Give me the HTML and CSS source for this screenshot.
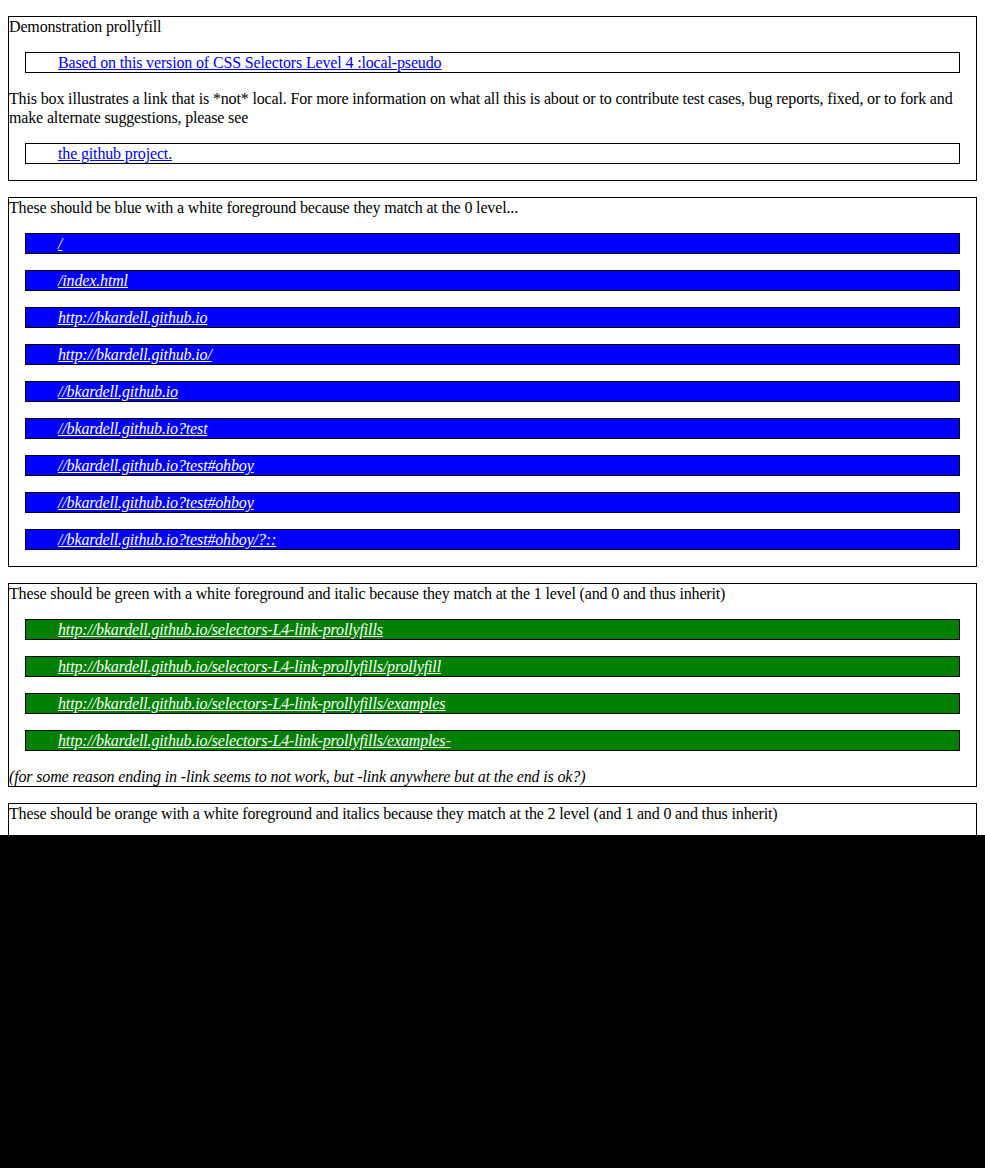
FILE: index.html
```html
<!DOCTYPE html>
<html>
<head>
<meta charset="utf-8">
<title>Demonstration prollyfill</title>
<link rel="stylesheet" href="styles.css">
</head>
<body>
<div class="page">
  <section class="box">
    Demonstration prollyfill
    <ul class="links plain">
      <li><a href="#">Based on this version of CSS Selectors Level 4 :local-pseudo</a></li>
    </ul>
    This box illustrates a link that is *not* local. For more information on what all this is about or to contribute test cases, bug reports, fixed, or to fork and make alternate suggestions, please see
    <ul class="links plain">
      <li><a href="#">the github project.</a></li>
    </ul>
  </section>

  <section class="box">
    These should be blue with a white foreground because they match at the 0 level...
    <ul class="links level0">
      <li><a href="#">/</a></li>
      <li><a href="#">/index.html</a></li>
      <li><a href="#">http://bkardell.github.io</a></li>
      <li><a href="#">http://bkardell.github.io/</a></li>
      <li><a href="#">//bkardell.github.io</a></li>
      <li><a href="#">//bkardell.github.io?test</a></li>
      <li><a href="#">//bkardell.github.io?test#ohboy</a></li>
      <li><a href="#">//bkardell.github.io?test#ohboy</a></li>
      <li><a href="#">//bkardell.github.io?test#ohboy/?::</a></li>
    </ul>
  </section>

  <section class="box">
    These should be green with a white foreground and italic because they match at the 1 level (and 0 and thus inherit)
    <ul class="links level1">
      <li><a href="#">http://bkardell.github.io/selectors-L4-link-prollyfills</a></li>
      <li><a href="#">http://bkardell.github.io/selectors-L4-link-prollyfills/prollyfill</a></li>
      <li><a href="#">http://bkardell.github.io/selectors-L4-link-prollyfills/examples</a></li>
      <li><a href="#">http://bkardell.github.io/selectors-L4-link-prollyfills/examples-</a></li>
    </ul>
    <em>(for some reason ending in -link seems to not work, but -link anywhere but at the end is ok?)</em>
  </section>

  <section class="box box-last">
    These should be orange with a white foreground and italics because they match at the 2 level (and 1 and 0 and thus inherit)
  </section>
</div>
</body>
</html>
```
FILE: styles.css
```css
html {
  background: #000;
}

body {
  margin: 0;
  font-family: "Liberation Serif", "Times New Roman", serif;
  font-size: 16px;
  line-height: 19px;
  letter-spacing: -0.15px;
  color: #000;
}

.page {
  background: #fff;
  height: 835px;
  overflow: hidden;
  padding: 0 8px;
}

.box {
  display: block;
  margin: 16px 0;
  border: 1px solid #000;
}

.box-last {
  min-height: 120px;
}

.links {
  list-style: none;
  margin: 16px 0;
  padding: 0;
}

.links li {
  margin: 16px;
  border: 1px solid #000;
  padding-left: 32px;
}

.links a {
  color: #0000ee;
  text-decoration: underline;
}

.level0 li,
.level1 li {
  color: #fff;
}

.level0 a,
.level1 a {
  color: #fff;
  font-style: italic;
}

.level0 li {
  background: #0000ff;
}

.level1 li {
  background: #008000;
}
```
